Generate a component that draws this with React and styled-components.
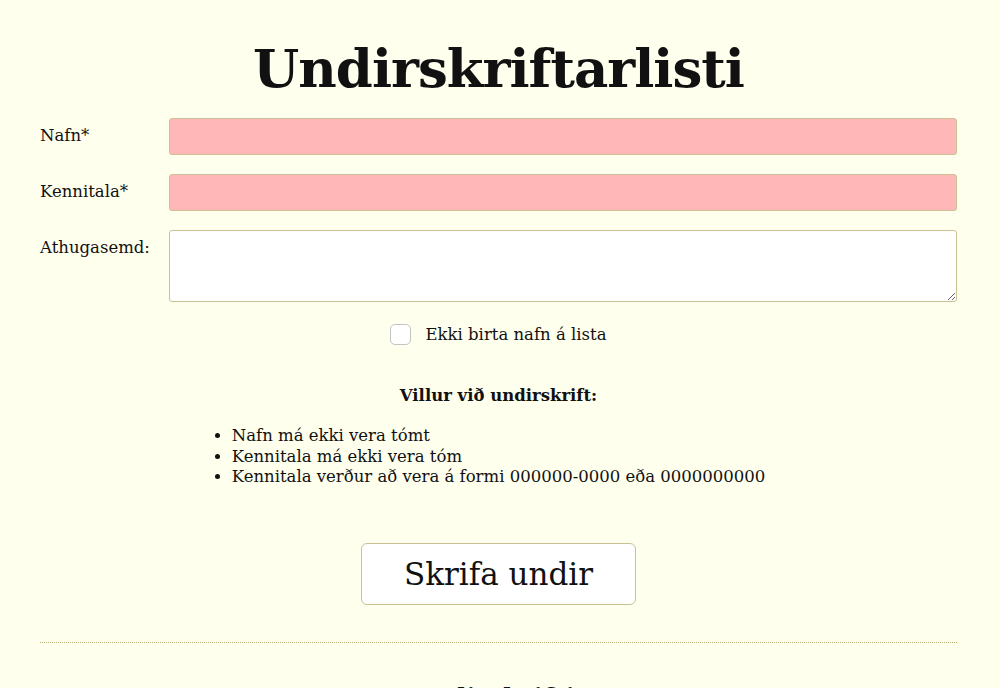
import React from 'react';
import styled, { createGlobalStyle } from 'styled-components';

const GlobalStyle = createGlobalStyle`
  body {
    margin: 0;
    background: #ffffee;
    color: #111;
    font-family: "DejaVu Serif", Georgia, serif;
    font-size: 16.5px;
  }
`;

const Page = styled.div`
  padding: 0 43px 0 40px;
`;

const Title = styled.h1`
  font-size: 53px;
  font-weight: bold;
  text-align: center;
  margin: 0;
  padding-top: 32px;
  line-height: 72px;
  letter-spacing: -1px;
`;

const Form = styled.form`
  display: flex;
  flex-direction: column;
  margin-top: 14px;
`;

const Field = styled.div`
  display: grid;
  grid-template-columns: 129px 1fr;
  align-items: start;
  margin-bottom: 19px;
`;

const Label = styled.label`
  padding-top: 8px;
  line-height: 20px;
`;

const TextInput = styled.input`
  box-sizing: border-box;
  height: 37px;
  width: 100%;
  margin: 0;
  background: ${p => (p.$invalid ? '#ffb7b7' : '#fff')};
  border: 1px solid #c9c193;
  border-radius: 3px;
  font: inherit;
  padding: 0 8px;
  outline: none;
`;

const TextArea = styled.textarea`
  box-sizing: border-box;
  height: 72px;
  width: 100%;
  margin: 0;
  background: #fff;
  border: 1px solid #c9c193;
  border-radius: 3px;
  font: inherit;
  padding: 6px 8px;
  display: block;
`;

const CheckRow = styled.label`
  display: flex;
  justify-content: center;
  align-items: center;
  gap: 14px;
  margin-top: 3px;
  cursor: pointer;
`;

const Box = styled.input`
  appearance: none;
  width: 21px;
  height: 21px;
  margin: 0;
  border: 1px solid #c4c4c4;
  border-radius: 5px;
  background: #fff;
`;

const Errors = styled.div`
  margin-top: 41px;
  text-align: center;
`;

const ErrorTitle = styled.strong`
  display: block;
  line-height: 20px;
`;

const ErrorList = styled.ul`
  display: table;
  margin: 20px auto 0;
  padding: 0;
  text-align: left;
  line-height: 20.5px;

  li {
    list-style: disc outside;
  }
`;

const Submit = styled.button`
  display: block;
  margin: 55px auto 0;
  width: 275px;
  height: 62px;
  background: #fff;
  border: 1px solid #c9c193;
  border-radius: 6px;
  font-family: inherit;
  font-size: 31px;
  color: #111;
  cursor: pointer;
`;

const Divider = styled.hr`
  border: none;
  border-top: 1px dotted #b6ad70;
  margin: 37px 0 0;
`;

const Sub = styled.h2`
  font-size: 25px;
  text-align: center;
  margin: 40px 0 0;
`;

export default function App() {
  return (
    <Page>
      <GlobalStyle />
      <Title>Undirskriftarlisti</Title>
      <Form onSubmit={e => e.preventDefault()}>
        <Field>
          <Label htmlFor="nafn">Nafn*</Label>
          <TextInput id="nafn" $invalid />
        </Field>
        <Field>
          <Label htmlFor="kt">Kennitala*</Label>
          <TextInput id="kt" $invalid />
        </Field>
        <Field>
          <Label htmlFor="ath">Athugasemd:</Label>
          <TextArea id="ath" />
        </Field>
        <CheckRow>
          <Box type="checkbox" />
          Ekki birta nafn á lista
        </CheckRow>
        <Errors>
          <ErrorTitle>Villur við undirskrift:</ErrorTitle>
          <ErrorList>
            <li>Nafn má ekki vera tómt</li>
            <li>Kennitala má ekki vera tóm</li>
            <li>Kennitala verður að vera á formi 000000-0000 eða 0000000000</li>
          </ErrorList>
        </Errors>
        <Submit type="submit">Skrifa undir</Submit>
      </Form>
      <Divider />
      <Sub>Undirskriftir</Sub>
    </Page>
  );
}
